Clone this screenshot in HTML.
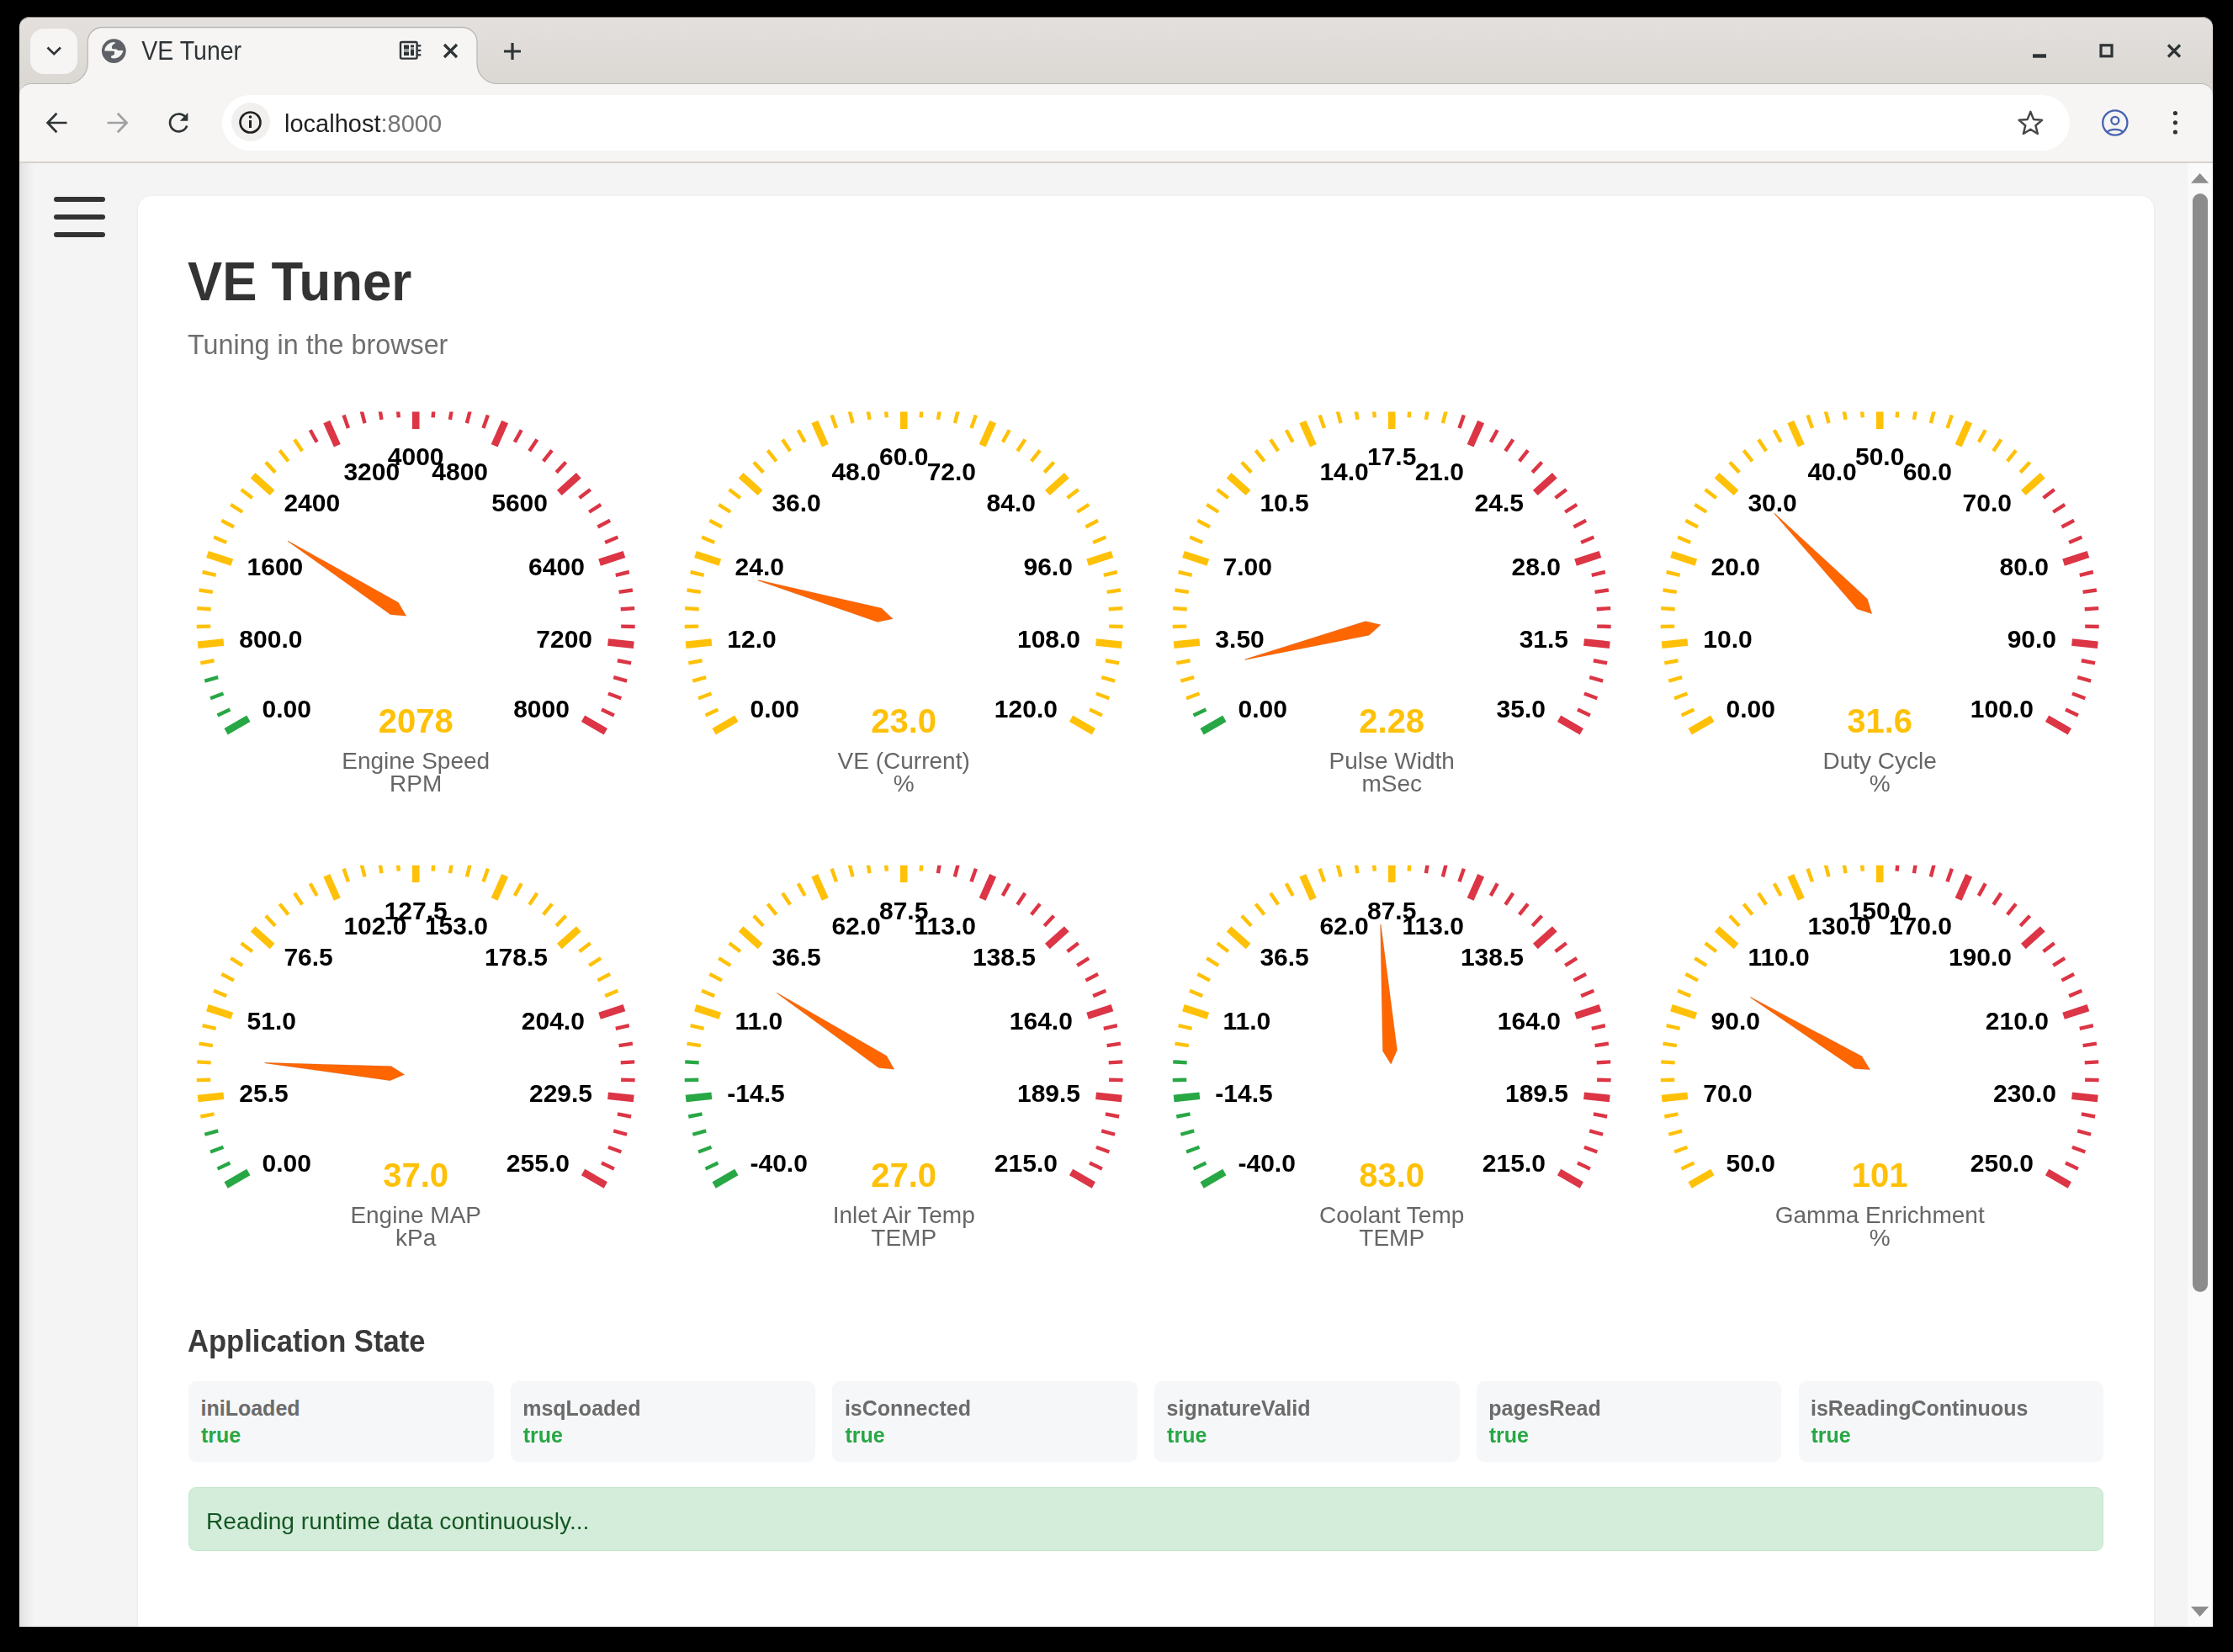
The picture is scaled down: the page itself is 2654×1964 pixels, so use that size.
<!DOCTYPE html><html><head><meta charset="utf-8"><title>VE Tuner</title><style>
*{box-sizing:border-box;margin:0;padding:0}
html,body{width:2654px;height:1964px;overflow:hidden;background:#000}
body{position:relative;font-family:"Liberation Sans",sans-serif}
.abs{position:absolute}
#win{position:absolute;left:23px;top:20px;width:2607px;height:1914px;border-radius:12px 12px 0 0;overflow:hidden;background:#dcd9d6}
#strip{position:absolute;left:0;top:0;width:2607px;height:80px;background:linear-gradient(#e3e0dd,#dbd8d4);border-radius:12px 12px 0 0;box-shadow:inset 0 1px 0 rgba(60,60,60,0.55)}
#toolbar{position:absolute;left:0;top:79px;width:2607px;height:93.5px;background:#f6f5f4;border-radius:14px 14px 0 0;border-top:1.5px solid #b8b6b4}
#tbline{position:absolute;left:0;top:172px;width:2607px;height:1.5px;background:#d6d2ce}
#view{position:absolute;left:0;top:173.5px;width:2607px;height:1741px;background:#f4f4f4;overflow:hidden}
#lshadow{position:absolute;left:0;top:0;width:18px;height:1741px;background:linear-gradient(to right,rgba(0,0,0,0.07),rgba(0,0,0,0))}
#sbar{position:absolute;left:2576.5px;top:0;width:30.5px;height:1741px;background:#fafafa}
#thumb{position:absolute;left:6.5px;top:36.3px;width:18px;height:1306.5px;border-radius:9px;background:#8c8c8c}
#card{position:absolute;left:141px;top:39.5px;width:2396px;height:1800px;background:#fff;border-radius:16px;box-shadow:0 1px 4px rgba(0,0,0,0.06)}
.ham{position:absolute;left:41px;width:60.5px;height:6px;border-radius:3px;background:#333}
#tab{position:absolute;left:82px;top:12px;width:463px;height:68px;background:#f6f5f4;border-radius:12px 12px 0 0;border:1px solid #c2bfbc;border-bottom:none}
#chev{position:absolute;left:13px;top:14px;width:56px;height:53.6px;background:#f6f5f4;border-radius:16px}
#addr{position:absolute;left:241px;top:92.5px;width:2196px;height:66px;background:#fff;border-radius:33px}
#infobg{position:absolute;left:252px;top:102px;width:46px;height:46px;border-radius:23px;background:#f1f0ef}
.t{position:absolute;white-space:nowrap;line-height:1}
svg{position:absolute;left:0;top:0;overflow:visible;will-change:transform}
.t{will-change:transform}
.gl{font:bold 30px "Liberation Sans",sans-serif;fill:#000}
.gv{font:bold 40px "Liberation Sans",sans-serif;fill:#ffc107}
.gt{font:28px "Liberation Sans",sans-serif;fill:#666}
.box{position:absolute;top:1641.5px;width:362.5px;height:96px;background:#f6f7f9;border-radius:9px}
.bk{position:absolute;left:14.5px;top:18px;font:bold 25px "Liberation Sans",sans-serif;color:#6b6b6b;white-space:nowrap}
.bv{position:absolute;left:15px;top:50px;font:bold 25px "Liberation Sans",sans-serif;color:#28a745;white-space:nowrap}
#alert{position:absolute;left:224px;top:1767.5px;width:2276px;height:76.5px;background:#d4edda;border:1.5px solid #c3e6cb;border-radius:9px}
</style></head><body>
<div id="win">
<div id="strip"></div>
<div id="toolbar"></div>
<svg width="2607" height="100" style="left:0;top:0"><path d="M56.6,79.7 C70,79.7 81.2,69 81.2,55 L81.2,30 C81.2,20 89,12.5 99,12.5 L526,12.5 C536,12.5 544,20 544,30 L544,55 C544,69 555,79.7 568.7,79.7 L568.7,82 L56.6,82 Z" fill="#f6f5f4"/><path d="M56.6,79.7 C70,79.7 81.2,69 81.2,55 L81.2,30 C81.2,20 89,12.5 99,12.5 L526,12.5 C536,12.5 544,20 544,30 L544,55 C544,69 555,79.7 568.7,79.7" fill="none" stroke="#bab8b6" stroke-width="1.3"/></svg>
<div id="chev"></div>
<div id="addr"></div><div id="infobg"></div>
<div id="tbline"></div>
<div id="view"><div id="lshadow"></div><div id="card"></div><div id="sbar"><div id="thumb"></div></div></div>
</div>
<div class="ham" style="left:64px;top:234px"></div>
<div class="ham" style="left:64px;top:255px"></div>
<div class="ham" style="left:64px;top:276px"></div>
<svg width="2654" height="1964" style="left:0;top:0">
<g fill="none" stroke="#2e3436" stroke-width="3" stroke-linecap="butt" stroke-linejoin="miter">
 <path d="M56.5,56.5 L64.2,64.2 L71.9,56.5" stroke-width="2.7"/>
</g>
<g transform="translate(135.3,60.6)">
 <circle r="14.4" fill="#5e6266"/>
 <path d="M-11.1,0 A11.3,11.3 0 0 1 1.45,-10.4 L1.45,-9 C-1,-8 -2.5,-6 -2.4,-4.1 C-2.3,-2.5 -1.5,-2.3 0,-2.3 L2.9,-2.2 C4,-2 4.4,-1.5 4.4,-0.7 L11.1,-0.5 A11.3,11.3 0 0 1 -2.9,8.5 L-3.4,6.1 C-1,5 0.7,4.5 0.7,3.9 L0.7,0.7 C0.7,0.3 0,0.25 -1,0.25 Z" fill="#f6f5f4"/>
</g>
<text transform="translate(168.3,70.6) scale(1,1.075)" x="0" y="0" style="font:28.5px 'Liberation Sans',sans-serif" fill="#2e3436">VE Tuner</text>
<g>
 <rect x="476" y="50" width="19.6" height="19.6" rx="1.5" fill="none" stroke="#2e3436" stroke-width="2.4"/>
 <rect x="480" y="53.5" width="6" height="5" fill="#2e3436"/><rect x="480" y="58.5" width="6" height="3.5" fill="#9a9c9e"/><rect x="480" y="62" width="6" height="4" fill="#2e3436"/>
 <rect x="488" y="53.5" width="4" height="2.6" fill="#2e3436"/><rect x="488" y="56.1" width="4" height="3" fill="#9a9c9e"/><rect x="488" y="59.1" width="4" height="7" fill="#2e3436"/>
 <rect x="496.5" y="53.2" width="3.8" height="2.3" fill="#2e3436"/><rect x="496.5" y="58.8" width="3.8" height="2.3" fill="#2e3436"/><rect x="496.5" y="64.2" width="3.8" height="2.3" fill="#2e3436"/>
</g>
<g stroke="#2e3436" stroke-width="3.2" fill="none">
 <path d="M528,53 L543,68 M543,53 L528,68"/>
 <path d="M609,51 v20 M599,61 h20"/>
 <path d="M2416,66.5 h16" stroke-width="4.5"/>
 <rect x="2497" y="53.8" width="13" height="13" stroke-width="3.2"/>
 <path d="M2577,53.5 L2591,67.5 M2591,53.5 L2577,67.5"/>
</g>
<g stroke="#2e3436" stroke-width="2.7" fill="none" stroke-linecap="butt">
 <path d="M79.5,146 H57.5 M67.4,134.8 L56.6,146 L67.4,157.2"/>
</g>
<g stroke="#a1a1a1" stroke-width="2.7" fill="none">
 <path d="M127.6,146 H149.6 M139.8,134.8 L150.6,146 L139.8,157.2"/>
</g>
<g stroke="#2e3436" stroke-width="2.7" fill="none">
 <path d="M221.6,141 A10.4,10.4 0 1 0 222.2,149.5"/>
</g>
<path d="M223.3,134 V143.8 H213.8 Z" fill="#2e3436"/>
<g>
 <circle cx="297.5" cy="145.5" r="12" fill="none" stroke="#1f1f1f" stroke-width="2.6"/>
 <rect x="296" y="143" width="3" height="9" fill="#1f1f1f"/>
 <circle cx="297.5" cy="139" r="1.8" fill="#1f1f1f"/>
</g>
<text x="338" y="157" style="font:29px 'Liberation Sans',sans-serif"><tspan fill="#1f1f1f">localhost</tspan><tspan fill="#767676">:8000</tspan></text>
<path d="M2413.35,132.90 L2417.11,142.12 L2427.05,142.85 L2419.44,149.28 L2421.81,158.95 L2413.35,153.70 L2404.89,158.95 L2407.26,149.28 L2399.65,142.85 L2409.59,142.12 Z" fill="none" stroke="#474747" stroke-width="2.5" stroke-linejoin="round"/>
<g fill="none" stroke="#4763b0" stroke-width="2.3">
 <circle cx="2513.8" cy="146" r="14.6"/>
 <circle cx="2513.8" cy="143.3" r="4.5"/>
 <path d="M2504.8,157 C2507.5,152.8 2520,152.8 2522.8,157"/>
</g>
<g fill="#2e3436">
 <circle cx="2585.4" cy="134.5" r="2.6"/><circle cx="2585.4" cy="145.8" r="2.6"/><circle cx="2585.4" cy="157" r="2.6"/>
</g>
<g fill="#8d8d8d">
 <path d="M2604,217.7 L2614.6,206 L2625.3,217.7 Z"/>
 <path d="M2604,1910 L2614.6,1922 L2625.3,1910 Z"/>
</g>
</svg>
<div class="t" style="left:223px;top:296.6px;font:bold 61.7px 'Liberation Sans',sans-serif;color:#333;transform:scaleY(1.051);transform-origin:0 0">VE Tuner</div>
<div class="t" style="left:223px;top:392.2px;font:32.3px 'Liberation Sans',sans-serif;color:#6f6f6f">Tuning in the browser</div>
<div class="t" style="left:223px;top:1573px;font:bold 34.6px 'Liberation Sans',sans-serif;color:#3a3a3a;transform:scaleY(1.09);transform-origin:0 0">Application State</div>
<div class="box" style="left:224.0px"><div class="bk">iniLoaded</div><div class="bv">true</div></div>
<div class="box" style="left:606.7px"><div class="bk">msqLoaded</div><div class="bv">true</div></div>
<div class="box" style="left:989.4px"><div class="bk">isConnected</div><div class="bv">true</div></div>
<div class="box" style="left:1372.1px"><div class="bk">signatureValid</div><div class="bv">true</div></div>
<div class="box" style="left:1754.8px"><div class="bk">pagesRead</div><div class="bv">true</div></div>
<div class="box" style="left:2137.5px"><div class="bk">isReadingContinuous</div><div class="bv">true</div></div>
<div id="alert"><div class="t" style="left:19.5px;top:23px;font:28.2px 'Liberation Sans',sans-serif;color:#155724">Reading runtime data continuously...</div></div>
<svg width="2654" height="1964"><defs><clipPath id="row0"><rect x="0" y="489.5" width="2654" height="700"/></clipPath><clipPath id="row1"><rect x="0" y="1028.7" width="2654" height="700"/></clipPath></defs>
<g clip-path="url(#row0)">
<line x1="295.36" y1="854.3" x2="268.6" y2="869.75" stroke="#28a745" stroke-width="8.6"/>
<line x1="273.42" y1="843.39" x2="258.49" y2="850.42" stroke="#28a745" stroke-width="4.4"/>
<line x1="265.5" y1="824.55" x2="250.04" y2="830.3" stroke="#28a745" stroke-width="4.4"/>
<line x1="259.19" y1="805.12" x2="243.3" y2="809.55" stroke="#28a745" stroke-width="4.4"/>
<line x1="254.52" y1="785.22" x2="238.31" y2="788.31" stroke="#ffc107" stroke-width="4.4"/>
<line x1="265.86" y1="763.5" x2="235.13" y2="766.73" stroke="#ffc107" stroke-width="8.6"/>
<line x1="250.25" y1="744.61" x2="233.76" y2="744.96" stroke="#ffc107" stroke-width="4.4"/>
<line x1="250.68" y1="724.18" x2="234.21" y2="723.14" stroke="#ffc107" stroke-width="4.4"/>
<line x1="252.82" y1="703.86" x2="236.49" y2="701.45" stroke="#ffc107" stroke-width="4.4"/>
<line x1="256.65" y1="683.78" x2="240.58" y2="680.01" stroke="#ffc107" stroke-width="4.4"/>
<line x1="275.84" y1="668.55" x2="246.45" y2="659" stroke="#ffc107" stroke-width="8.6"/>
<line x1="269.27" y1="644.95" x2="254.05" y2="638.55" stroke="#ffc107" stroke-width="4.4"/>
<line x1="277.97" y1="626.46" x2="263.34" y2="618.81" stroke="#ffc107" stroke-width="4.4"/>
<line x1="288.18" y1="608.76" x2="274.25" y2="599.92" stroke="#ffc107" stroke-width="4.4"/>
<line x1="299.85" y1="591.98" x2="286.7" y2="582" stroke="#ffc107" stroke-width="4.4"/>
<line x1="323.57" y1="585.87" x2="300.61" y2="565.19" stroke="#ffc107" stroke-width="8.6"/>
<line x1="327.17" y1="561.63" x2="315.88" y2="549.6" stroke="#ffc107" stroke-width="4.4"/>
<line x1="342.64" y1="548.28" x2="332.39" y2="535.35" stroke="#ffc107" stroke-width="4.4"/>
<line x1="359.17" y1="536.27" x2="350.04" y2="522.52" stroke="#ffc107" stroke-width="4.4"/>
<line x1="376.65" y1="525.68" x2="368.7" y2="511.22" stroke="#dc3545" stroke-width="4.4"/>
<line x1="400.81" y1="529.75" x2="388.25" y2="501.52" stroke="#dc3545" stroke-width="8.6"/>
<line x1="413.96" y1="509.07" x2="408.53" y2="493.49" stroke="#dc3545" stroke-width="4.4"/>
<line x1="433.52" y1="503.17" x2="429.42" y2="487.18" stroke="#dc3545" stroke-width="4.4"/>
<line x1="453.51" y1="498.92" x2="450.76" y2="482.65" stroke="#dc3545" stroke-width="4.4"/>
<line x1="473.78" y1="496.36" x2="472.4" y2="479.91" stroke="#dc3545" stroke-width="4.4"/>
<line x1="494.2" y1="509.9" x2="494.2" y2="479" stroke="#dc3545" stroke-width="8.6"/>
<line x1="514.62" y1="496.36" x2="516" y2="479.91" stroke="#dc3545" stroke-width="4.4"/>
<line x1="534.89" y1="498.92" x2="537.64" y2="482.65" stroke="#dc3545" stroke-width="4.4"/>
<line x1="554.88" y1="503.17" x2="558.98" y2="487.18" stroke="#dc3545" stroke-width="4.4"/>
<line x1="574.44" y1="509.07" x2="579.87" y2="493.49" stroke="#dc3545" stroke-width="4.4"/>
<line x1="587.59" y1="529.75" x2="600.15" y2="501.52" stroke="#dc3545" stroke-width="8.6"/>
<line x1="611.75" y1="525.68" x2="619.7" y2="511.22" stroke="#dc3545" stroke-width="4.4"/>
<line x1="629.23" y1="536.27" x2="638.36" y2="522.52" stroke="#dc3545" stroke-width="4.4"/>
<line x1="645.76" y1="548.28" x2="656.01" y2="535.35" stroke="#dc3545" stroke-width="4.4"/>
<line x1="661.23" y1="561.63" x2="672.52" y2="549.6" stroke="#dc3545" stroke-width="4.4"/>
<line x1="664.83" y1="585.87" x2="687.79" y2="565.19" stroke="#dc3545" stroke-width="8.6"/>
<line x1="688.55" y1="591.98" x2="701.7" y2="582" stroke="#dc3545" stroke-width="4.4"/>
<line x1="700.22" y1="608.76" x2="714.15" y2="599.92" stroke="#dc3545" stroke-width="4.4"/>
<line x1="710.43" y1="626.46" x2="725.06" y2="618.81" stroke="#dc3545" stroke-width="4.4"/>
<line x1="719.13" y1="644.95" x2="734.35" y2="638.55" stroke="#dc3545" stroke-width="4.4"/>
<line x1="712.56" y1="668.55" x2="741.95" y2="659" stroke="#dc3545" stroke-width="8.6"/>
<line x1="731.75" y1="683.78" x2="747.82" y2="680.01" stroke="#dc3545" stroke-width="4.4"/>
<line x1="735.58" y1="703.86" x2="751.91" y2="701.45" stroke="#dc3545" stroke-width="4.4"/>
<line x1="737.72" y1="724.18" x2="754.19" y2="723.14" stroke="#dc3545" stroke-width="4.4"/>
<line x1="738.15" y1="744.61" x2="754.64" y2="744.96" stroke="#dc3545" stroke-width="4.4"/>
<line x1="722.54" y1="763.5" x2="753.27" y2="766.73" stroke="#dc3545" stroke-width="8.6"/>
<line x1="733.88" y1="785.22" x2="750.09" y2="788.31" stroke="#dc3545" stroke-width="4.4"/>
<line x1="729.21" y1="805.12" x2="745.1" y2="809.55" stroke="#dc3545" stroke-width="4.4"/>
<line x1="722.9" y1="824.55" x2="738.36" y2="830.3" stroke="#dc3545" stroke-width="4.4"/>
<line x1="714.98" y1="843.39" x2="729.91" y2="850.42" stroke="#dc3545" stroke-width="4.4"/>
<line x1="693.04" y1="854.3" x2="719.8" y2="869.75" stroke="#dc3545" stroke-width="8.6"/>
<text x="311.47" y="852.9" text-anchor="start" class="gl">0.00</text>
<text x="284.36" y="770.17" text-anchor="start" class="gl">800.0</text>
<text x="293.53" y="683.65" text-anchor="start" class="gl">1600</text>
<text x="337.4" y="608.32" text-anchor="start" class="gl">2400</text>
<text x="408.38" y="571.44" text-anchor="start" class="gl">3200</text>
<text x="494.2" y="553.35" text-anchor="middle" class="gl">4000</text>
<text x="580.02" y="571.44" text-anchor="end" class="gl">4800</text>
<text x="651" y="608.32" text-anchor="end" class="gl">5600</text>
<text x="694.87" y="683.65" text-anchor="end" class="gl">6400</text>
<text x="704.04" y="770.17" text-anchor="end" class="gl">7200</text>
<text x="676.93" y="852.9" text-anchor="end" class="gl">8000</text>
<text x="494.2" y="870.5" text-anchor="middle" class="gv">2078</text>
<text x="494.2" y="913.5" text-anchor="middle" class="gt">Engine Speed</text>
<text x="494.2" y="940.5" text-anchor="middle" class="gt">RPM</text>
<polygon points="342.31,642.91 473.45,716.19 482.79,732.28 464.25,730.72 341.93,643.51" fill="#ff6600" stroke="rgba(120,60,20,0.25)" stroke-width="0.6"/>
</g>
<g clip-path="url(#row0)">
<line x1="875.36" y1="854.3" x2="848.6" y2="869.75" stroke="#ffc107" stroke-width="8.6"/>
<line x1="853.42" y1="843.39" x2="838.49" y2="850.42" stroke="#ffc107" stroke-width="4.4"/>
<line x1="845.5" y1="824.55" x2="830.04" y2="830.3" stroke="#ffc107" stroke-width="4.4"/>
<line x1="839.19" y1="805.12" x2="823.3" y2="809.55" stroke="#ffc107" stroke-width="4.4"/>
<line x1="834.52" y1="785.22" x2="818.31" y2="788.31" stroke="#ffc107" stroke-width="4.4"/>
<line x1="845.86" y1="763.5" x2="815.13" y2="766.73" stroke="#ffc107" stroke-width="8.6"/>
<line x1="830.25" y1="744.61" x2="813.76" y2="744.96" stroke="#ffc107" stroke-width="4.4"/>
<line x1="830.68" y1="724.18" x2="814.21" y2="723.14" stroke="#ffc107" stroke-width="4.4"/>
<line x1="832.82" y1="703.86" x2="816.49" y2="701.45" stroke="#ffc107" stroke-width="4.4"/>
<line x1="836.65" y1="683.78" x2="820.58" y2="680.01" stroke="#ffc107" stroke-width="4.4"/>
<line x1="855.84" y1="668.55" x2="826.45" y2="659" stroke="#ffc107" stroke-width="8.6"/>
<line x1="849.27" y1="644.95" x2="834.05" y2="638.55" stroke="#ffc107" stroke-width="4.4"/>
<line x1="857.97" y1="626.46" x2="843.34" y2="618.81" stroke="#ffc107" stroke-width="4.4"/>
<line x1="868.18" y1="608.76" x2="854.25" y2="599.92" stroke="#ffc107" stroke-width="4.4"/>
<line x1="879.85" y1="591.98" x2="866.7" y2="582" stroke="#ffc107" stroke-width="4.4"/>
<line x1="903.57" y1="585.87" x2="880.61" y2="565.19" stroke="#ffc107" stroke-width="8.6"/>
<line x1="907.17" y1="561.63" x2="895.88" y2="549.6" stroke="#ffc107" stroke-width="4.4"/>
<line x1="922.64" y1="548.28" x2="912.39" y2="535.35" stroke="#ffc107" stroke-width="4.4"/>
<line x1="939.17" y1="536.27" x2="930.04" y2="522.52" stroke="#ffc107" stroke-width="4.4"/>
<line x1="956.65" y1="525.68" x2="948.7" y2="511.22" stroke="#ffc107" stroke-width="4.4"/>
<line x1="980.81" y1="529.75" x2="968.25" y2="501.52" stroke="#ffc107" stroke-width="8.6"/>
<line x1="993.96" y1="509.07" x2="988.53" y2="493.49" stroke="#ffc107" stroke-width="4.4"/>
<line x1="1013.52" y1="503.17" x2="1009.42" y2="487.18" stroke="#ffc107" stroke-width="4.4"/>
<line x1="1033.51" y1="498.92" x2="1030.76" y2="482.65" stroke="#ffc107" stroke-width="4.4"/>
<line x1="1053.78" y1="496.36" x2="1052.4" y2="479.91" stroke="#ffc107" stroke-width="4.4"/>
<line x1="1074.2" y1="509.9" x2="1074.2" y2="479" stroke="#ffc107" stroke-width="8.6"/>
<line x1="1094.62" y1="496.36" x2="1096" y2="479.91" stroke="#ffc107" stroke-width="4.4"/>
<line x1="1114.89" y1="498.92" x2="1117.64" y2="482.65" stroke="#ffc107" stroke-width="4.4"/>
<line x1="1134.88" y1="503.17" x2="1138.98" y2="487.18" stroke="#ffc107" stroke-width="4.4"/>
<line x1="1154.44" y1="509.07" x2="1159.87" y2="493.49" stroke="#ffc107" stroke-width="4.4"/>
<line x1="1167.59" y1="529.75" x2="1180.15" y2="501.52" stroke="#ffc107" stroke-width="8.6"/>
<line x1="1191.75" y1="525.68" x2="1199.7" y2="511.22" stroke="#ffc107" stroke-width="4.4"/>
<line x1="1209.23" y1="536.27" x2="1218.36" y2="522.52" stroke="#ffc107" stroke-width="4.4"/>
<line x1="1225.76" y1="548.28" x2="1236.01" y2="535.35" stroke="#ffc107" stroke-width="4.4"/>
<line x1="1241.23" y1="561.63" x2="1252.52" y2="549.6" stroke="#ffc107" stroke-width="4.4"/>
<line x1="1244.83" y1="585.87" x2="1267.79" y2="565.19" stroke="#ffc107" stroke-width="8.6"/>
<line x1="1268.55" y1="591.98" x2="1281.7" y2="582" stroke="#ffc107" stroke-width="4.4"/>
<line x1="1280.22" y1="608.76" x2="1294.15" y2="599.92" stroke="#ffc107" stroke-width="4.4"/>
<line x1="1290.43" y1="626.46" x2="1305.06" y2="618.81" stroke="#ffc107" stroke-width="4.4"/>
<line x1="1299.13" y1="644.95" x2="1314.35" y2="638.55" stroke="#ffc107" stroke-width="4.4"/>
<line x1="1292.56" y1="668.55" x2="1321.95" y2="659" stroke="#ffc107" stroke-width="8.6"/>
<line x1="1311.75" y1="683.78" x2="1327.82" y2="680.01" stroke="#ffc107" stroke-width="4.4"/>
<line x1="1315.58" y1="703.86" x2="1331.91" y2="701.45" stroke="#ffc107" stroke-width="4.4"/>
<line x1="1317.72" y1="724.18" x2="1334.19" y2="723.14" stroke="#ffc107" stroke-width="4.4"/>
<line x1="1318.15" y1="744.61" x2="1334.64" y2="744.96" stroke="#ffc107" stroke-width="4.4"/>
<line x1="1302.54" y1="763.5" x2="1333.27" y2="766.73" stroke="#ffc107" stroke-width="8.6"/>
<line x1="1313.88" y1="785.22" x2="1330.09" y2="788.31" stroke="#ffc107" stroke-width="4.4"/>
<line x1="1309.21" y1="805.12" x2="1325.1" y2="809.55" stroke="#ffc107" stroke-width="4.4"/>
<line x1="1302.9" y1="824.55" x2="1318.36" y2="830.3" stroke="#ffc107" stroke-width="4.4"/>
<line x1="1294.98" y1="843.39" x2="1309.91" y2="850.42" stroke="#ffc107" stroke-width="4.4"/>
<line x1="1273.04" y1="854.3" x2="1299.8" y2="869.75" stroke="#ffc107" stroke-width="8.6"/>
<text x="891.47" y="852.9" text-anchor="start" class="gl">0.00</text>
<text x="864.36" y="770.17" text-anchor="start" class="gl">12.0</text>
<text x="873.53" y="683.65" text-anchor="start" class="gl">24.0</text>
<text x="917.4" y="608.32" text-anchor="start" class="gl">36.0</text>
<text x="988.38" y="571.44" text-anchor="start" class="gl">48.0</text>
<text x="1074.2" y="553.35" text-anchor="middle" class="gl">60.0</text>
<text x="1160.02" y="571.44" text-anchor="end" class="gl">72.0</text>
<text x="1231" y="608.32" text-anchor="end" class="gl">84.0</text>
<text x="1274.87" y="683.65" text-anchor="end" class="gl">96.0</text>
<text x="1284.04" y="770.17" text-anchor="end" class="gl">108.0</text>
<text x="1256.93" y="852.9" text-anchor="end" class="gl">120.0</text>
<text x="1074.2" y="870.5" text-anchor="middle" class="gv">23.0</text>
<text x="1074.2" y="913.5" text-anchor="middle" class="gt">VE (Current)</text>
<text x="1074.2" y="940.5" text-anchor="middle" class="gt">%</text>
<polygon points="901.27,689.55 1047.73,722.96 1061.22,735.78 1042.99,739.5 901.08,690.22" fill="#ff6600" stroke="rgba(120,60,20,0.25)" stroke-width="0.6"/>
</g>
<g clip-path="url(#row0)">
<line x1="1455.36" y1="854.3" x2="1428.6" y2="869.75" stroke="#28a745" stroke-width="8.6"/>
<line x1="1433.42" y1="843.39" x2="1418.49" y2="850.42" stroke="#28a745" stroke-width="4.4"/>
<line x1="1425.5" y1="824.55" x2="1410.04" y2="830.3" stroke="#ffc107" stroke-width="4.4"/>
<line x1="1419.19" y1="805.12" x2="1403.3" y2="809.55" stroke="#ffc107" stroke-width="4.4"/>
<line x1="1414.52" y1="785.22" x2="1398.31" y2="788.31" stroke="#ffc107" stroke-width="4.4"/>
<line x1="1425.86" y1="763.5" x2="1395.13" y2="766.73" stroke="#ffc107" stroke-width="8.6"/>
<line x1="1410.25" y1="744.61" x2="1393.76" y2="744.96" stroke="#ffc107" stroke-width="4.4"/>
<line x1="1410.68" y1="724.18" x2="1394.21" y2="723.14" stroke="#ffc107" stroke-width="4.4"/>
<line x1="1412.82" y1="703.86" x2="1396.49" y2="701.45" stroke="#ffc107" stroke-width="4.4"/>
<line x1="1416.65" y1="683.78" x2="1400.58" y2="680.01" stroke="#ffc107" stroke-width="4.4"/>
<line x1="1435.84" y1="668.55" x2="1406.45" y2="659" stroke="#ffc107" stroke-width="8.6"/>
<line x1="1429.27" y1="644.95" x2="1414.05" y2="638.55" stroke="#ffc107" stroke-width="4.4"/>
<line x1="1437.97" y1="626.46" x2="1423.34" y2="618.81" stroke="#ffc107" stroke-width="4.4"/>
<line x1="1448.18" y1="608.76" x2="1434.25" y2="599.92" stroke="#ffc107" stroke-width="4.4"/>
<line x1="1459.85" y1="591.98" x2="1446.7" y2="582" stroke="#ffc107" stroke-width="4.4"/>
<line x1="1483.57" y1="585.87" x2="1460.61" y2="565.19" stroke="#ffc107" stroke-width="8.6"/>
<line x1="1487.17" y1="561.63" x2="1475.88" y2="549.6" stroke="#ffc107" stroke-width="4.4"/>
<line x1="1502.64" y1="548.28" x2="1492.39" y2="535.35" stroke="#ffc107" stroke-width="4.4"/>
<line x1="1519.17" y1="536.27" x2="1510.04" y2="522.52" stroke="#ffc107" stroke-width="4.4"/>
<line x1="1536.65" y1="525.68" x2="1528.7" y2="511.22" stroke="#ffc107" stroke-width="4.4"/>
<line x1="1560.81" y1="529.75" x2="1548.25" y2="501.52" stroke="#ffc107" stroke-width="8.6"/>
<line x1="1573.96" y1="509.07" x2="1568.53" y2="493.49" stroke="#ffc107" stroke-width="4.4"/>
<line x1="1593.52" y1="503.17" x2="1589.42" y2="487.18" stroke="#ffc107" stroke-width="4.4"/>
<line x1="1613.51" y1="498.92" x2="1610.76" y2="482.65" stroke="#ffc107" stroke-width="4.4"/>
<line x1="1633.78" y1="496.36" x2="1632.4" y2="479.91" stroke="#ffc107" stroke-width="4.4"/>
<line x1="1654.2" y1="509.9" x2="1654.2" y2="479" stroke="#ffc107" stroke-width="8.6"/>
<line x1="1674.62" y1="496.36" x2="1676" y2="479.91" stroke="#ffc107" stroke-width="4.4"/>
<line x1="1694.89" y1="498.92" x2="1697.64" y2="482.65" stroke="#ffc107" stroke-width="4.4"/>
<line x1="1714.88" y1="503.17" x2="1718.98" y2="487.18" stroke="#ffc107" stroke-width="4.4"/>
<line x1="1734.44" y1="509.07" x2="1739.87" y2="493.49" stroke="#dc3545" stroke-width="4.4"/>
<line x1="1747.59" y1="529.75" x2="1760.15" y2="501.52" stroke="#dc3545" stroke-width="8.6"/>
<line x1="1771.75" y1="525.68" x2="1779.7" y2="511.22" stroke="#dc3545" stroke-width="4.4"/>
<line x1="1789.23" y1="536.27" x2="1798.36" y2="522.52" stroke="#dc3545" stroke-width="4.4"/>
<line x1="1805.76" y1="548.28" x2="1816.01" y2="535.35" stroke="#dc3545" stroke-width="4.4"/>
<line x1="1821.23" y1="561.63" x2="1832.52" y2="549.6" stroke="#dc3545" stroke-width="4.4"/>
<line x1="1824.83" y1="585.87" x2="1847.79" y2="565.19" stroke="#dc3545" stroke-width="8.6"/>
<line x1="1848.55" y1="591.98" x2="1861.7" y2="582" stroke="#dc3545" stroke-width="4.4"/>
<line x1="1860.22" y1="608.76" x2="1874.15" y2="599.92" stroke="#dc3545" stroke-width="4.4"/>
<line x1="1870.43" y1="626.46" x2="1885.06" y2="618.81" stroke="#dc3545" stroke-width="4.4"/>
<line x1="1879.13" y1="644.95" x2="1894.35" y2="638.55" stroke="#dc3545" stroke-width="4.4"/>
<line x1="1872.56" y1="668.55" x2="1901.95" y2="659" stroke="#dc3545" stroke-width="8.6"/>
<line x1="1891.75" y1="683.78" x2="1907.82" y2="680.01" stroke="#dc3545" stroke-width="4.4"/>
<line x1="1895.58" y1="703.86" x2="1911.91" y2="701.45" stroke="#dc3545" stroke-width="4.4"/>
<line x1="1897.72" y1="724.18" x2="1914.19" y2="723.14" stroke="#dc3545" stroke-width="4.4"/>
<line x1="1898.15" y1="744.61" x2="1914.64" y2="744.96" stroke="#dc3545" stroke-width="4.4"/>
<line x1="1882.54" y1="763.5" x2="1913.27" y2="766.73" stroke="#dc3545" stroke-width="8.6"/>
<line x1="1893.88" y1="785.22" x2="1910.09" y2="788.31" stroke="#dc3545" stroke-width="4.4"/>
<line x1="1889.21" y1="805.12" x2="1905.1" y2="809.55" stroke="#dc3545" stroke-width="4.4"/>
<line x1="1882.9" y1="824.55" x2="1898.36" y2="830.3" stroke="#dc3545" stroke-width="4.4"/>
<line x1="1874.98" y1="843.39" x2="1889.91" y2="850.42" stroke="#dc3545" stroke-width="4.4"/>
<line x1="1853.04" y1="854.3" x2="1879.8" y2="869.75" stroke="#dc3545" stroke-width="8.6"/>
<text x="1471.47" y="852.9" text-anchor="start" class="gl">0.00</text>
<text x="1444.36" y="770.17" text-anchor="start" class="gl">3.50</text>
<text x="1453.53" y="683.65" text-anchor="start" class="gl">7.00</text>
<text x="1497.4" y="608.32" text-anchor="start" class="gl">10.5</text>
<text x="1568.38" y="571.44" text-anchor="start" class="gl">14.0</text>
<text x="1654.2" y="553.35" text-anchor="middle" class="gl">17.5</text>
<text x="1740.02" y="571.44" text-anchor="end" class="gl">21.0</text>
<text x="1811" y="608.32" text-anchor="end" class="gl">24.5</text>
<text x="1854.87" y="683.65" text-anchor="end" class="gl">28.0</text>
<text x="1864.04" y="770.17" text-anchor="end" class="gl">31.5</text>
<text x="1836.93" y="852.9" text-anchor="end" class="gl">35.0</text>
<text x="1654.2" y="870.5" text-anchor="middle" class="gv">2.28</text>
<text x="1654.2" y="913.5" text-anchor="middle" class="gt">Pulse Width</text>
<text x="1654.2" y="940.5" text-anchor="middle" class="gt">mSec</text>
<polygon points="1479.74,783.82 1623,738.61 1641.12,742.85 1627.27,755.27 1479.92,784.5" fill="#ff6600" stroke="rgba(120,60,20,0.25)" stroke-width="0.6"/>
</g>
<g clip-path="url(#row0)">
<line x1="2035.36" y1="854.3" x2="2008.6" y2="869.75" stroke="#ffc107" stroke-width="8.6"/>
<line x1="2013.42" y1="843.39" x2="1998.49" y2="850.42" stroke="#ffc107" stroke-width="4.4"/>
<line x1="2005.5" y1="824.55" x2="1990.04" y2="830.3" stroke="#ffc107" stroke-width="4.4"/>
<line x1="1999.19" y1="805.12" x2="1983.3" y2="809.55" stroke="#ffc107" stroke-width="4.4"/>
<line x1="1994.52" y1="785.22" x2="1978.31" y2="788.31" stroke="#ffc107" stroke-width="4.4"/>
<line x1="2005.86" y1="763.5" x2="1975.13" y2="766.73" stroke="#ffc107" stroke-width="8.6"/>
<line x1="1990.25" y1="744.61" x2="1973.76" y2="744.96" stroke="#ffc107" stroke-width="4.4"/>
<line x1="1990.68" y1="724.18" x2="1974.21" y2="723.14" stroke="#ffc107" stroke-width="4.4"/>
<line x1="1992.82" y1="703.86" x2="1976.49" y2="701.45" stroke="#ffc107" stroke-width="4.4"/>
<line x1="1996.65" y1="683.78" x2="1980.58" y2="680.01" stroke="#ffc107" stroke-width="4.4"/>
<line x1="2015.84" y1="668.55" x2="1986.45" y2="659" stroke="#ffc107" stroke-width="8.6"/>
<line x1="2009.27" y1="644.95" x2="1994.05" y2="638.55" stroke="#ffc107" stroke-width="4.4"/>
<line x1="2017.97" y1="626.46" x2="2003.34" y2="618.81" stroke="#ffc107" stroke-width="4.4"/>
<line x1="2028.18" y1="608.76" x2="2014.25" y2="599.92" stroke="#ffc107" stroke-width="4.4"/>
<line x1="2039.85" y1="591.98" x2="2026.7" y2="582" stroke="#ffc107" stroke-width="4.4"/>
<line x1="2063.57" y1="585.87" x2="2040.61" y2="565.19" stroke="#ffc107" stroke-width="8.6"/>
<line x1="2067.17" y1="561.63" x2="2055.88" y2="549.6" stroke="#ffc107" stroke-width="4.4"/>
<line x1="2082.64" y1="548.28" x2="2072.39" y2="535.35" stroke="#ffc107" stroke-width="4.4"/>
<line x1="2099.17" y1="536.27" x2="2090.04" y2="522.52" stroke="#ffc107" stroke-width="4.4"/>
<line x1="2116.65" y1="525.68" x2="2108.7" y2="511.22" stroke="#ffc107" stroke-width="4.4"/>
<line x1="2140.81" y1="529.75" x2="2128.25" y2="501.52" stroke="#ffc107" stroke-width="8.6"/>
<line x1="2153.96" y1="509.07" x2="2148.53" y2="493.49" stroke="#ffc107" stroke-width="4.4"/>
<line x1="2173.52" y1="503.17" x2="2169.42" y2="487.18" stroke="#ffc107" stroke-width="4.4"/>
<line x1="2193.51" y1="498.92" x2="2190.76" y2="482.65" stroke="#ffc107" stroke-width="4.4"/>
<line x1="2213.78" y1="496.36" x2="2212.4" y2="479.91" stroke="#ffc107" stroke-width="4.4"/>
<line x1="2234.2" y1="509.9" x2="2234.2" y2="479" stroke="#ffc107" stroke-width="8.6"/>
<line x1="2254.62" y1="496.36" x2="2256" y2="479.91" stroke="#ffc107" stroke-width="4.4"/>
<line x1="2274.89" y1="498.92" x2="2277.64" y2="482.65" stroke="#ffc107" stroke-width="4.4"/>
<line x1="2294.88" y1="503.17" x2="2298.98" y2="487.18" stroke="#ffc107" stroke-width="4.4"/>
<line x1="2314.44" y1="509.07" x2="2319.87" y2="493.49" stroke="#ffc107" stroke-width="4.4"/>
<line x1="2327.59" y1="529.75" x2="2340.15" y2="501.52" stroke="#ffc107" stroke-width="8.6"/>
<line x1="2351.75" y1="525.68" x2="2359.7" y2="511.22" stroke="#ffc107" stroke-width="4.4"/>
<line x1="2369.23" y1="536.27" x2="2378.36" y2="522.52" stroke="#ffc107" stroke-width="4.4"/>
<line x1="2385.76" y1="548.28" x2="2396.01" y2="535.35" stroke="#ffc107" stroke-width="4.4"/>
<line x1="2401.23" y1="561.63" x2="2412.52" y2="549.6" stroke="#ffc107" stroke-width="4.4"/>
<line x1="2404.83" y1="585.87" x2="2427.79" y2="565.19" stroke="#ffc107" stroke-width="8.6"/>
<line x1="2428.55" y1="591.98" x2="2441.7" y2="582" stroke="#dc3545" stroke-width="4.4"/>
<line x1="2440.22" y1="608.76" x2="2454.15" y2="599.92" stroke="#dc3545" stroke-width="4.4"/>
<line x1="2450.43" y1="626.46" x2="2465.06" y2="618.81" stroke="#dc3545" stroke-width="4.4"/>
<line x1="2459.13" y1="644.95" x2="2474.35" y2="638.55" stroke="#dc3545" stroke-width="4.4"/>
<line x1="2452.56" y1="668.55" x2="2481.95" y2="659" stroke="#dc3545" stroke-width="8.6"/>
<line x1="2471.75" y1="683.78" x2="2487.82" y2="680.01" stroke="#dc3545" stroke-width="4.4"/>
<line x1="2475.58" y1="703.86" x2="2491.91" y2="701.45" stroke="#dc3545" stroke-width="4.4"/>
<line x1="2477.72" y1="724.18" x2="2494.19" y2="723.14" stroke="#dc3545" stroke-width="4.4"/>
<line x1="2478.15" y1="744.61" x2="2494.64" y2="744.96" stroke="#dc3545" stroke-width="4.4"/>
<line x1="2462.54" y1="763.5" x2="2493.27" y2="766.73" stroke="#dc3545" stroke-width="8.6"/>
<line x1="2473.88" y1="785.22" x2="2490.09" y2="788.31" stroke="#dc3545" stroke-width="4.4"/>
<line x1="2469.21" y1="805.12" x2="2485.1" y2="809.55" stroke="#dc3545" stroke-width="4.4"/>
<line x1="2462.9" y1="824.55" x2="2478.36" y2="830.3" stroke="#dc3545" stroke-width="4.4"/>
<line x1="2454.98" y1="843.39" x2="2469.91" y2="850.42" stroke="#dc3545" stroke-width="4.4"/>
<line x1="2433.04" y1="854.3" x2="2459.8" y2="869.75" stroke="#dc3545" stroke-width="8.6"/>
<text x="2051.47" y="852.9" text-anchor="start" class="gl">0.00</text>
<text x="2024.36" y="770.17" text-anchor="start" class="gl">10.0</text>
<text x="2033.53" y="683.65" text-anchor="start" class="gl">20.0</text>
<text x="2077.4" y="608.32" text-anchor="start" class="gl">30.0</text>
<text x="2148.38" y="571.44" text-anchor="start" class="gl">40.0</text>
<text x="2234.2" y="553.35" text-anchor="middle" class="gl">50.0</text>
<text x="2320.02" y="571.44" text-anchor="end" class="gl">60.0</text>
<text x="2391" y="608.32" text-anchor="end" class="gl">70.0</text>
<text x="2434.87" y="683.65" text-anchor="end" class="gl">80.0</text>
<text x="2444.04" y="770.17" text-anchor="end" class="gl">90.0</text>
<text x="2416.93" y="852.9" text-anchor="end" class="gl">100.0</text>
<text x="2234.2" y="870.5" text-anchor="middle" class="gv">31.6</text>
<text x="2234.2" y="913.5" text-anchor="middle" class="gt">Duty Cycle</text>
<text x="2234.2" y="940.5" text-anchor="middle" class="gt">%</text>
<polygon points="2109.05,610.12 2219.47,711.99 2224.8,729.82 2207.13,723.97 2108.55,610.61" fill="#ff6600" stroke="rgba(120,60,20,0.25)" stroke-width="0.6"/>
</g>
<g clip-path="url(#row1)">
<line x1="295.36" y1="1393.5" x2="268.6" y2="1408.95" stroke="#28a745" stroke-width="8.6"/>
<line x1="273.42" y1="1382.59" x2="258.49" y2="1389.62" stroke="#28a745" stroke-width="4.4"/>
<line x1="265.5" y1="1363.75" x2="250.04" y2="1369.5" stroke="#28a745" stroke-width="4.4"/>
<line x1="259.19" y1="1344.32" x2="243.3" y2="1348.75" stroke="#28a745" stroke-width="4.4"/>
<line x1="254.52" y1="1324.42" x2="238.31" y2="1327.51" stroke="#ffc107" stroke-width="4.4"/>
<line x1="265.86" y1="1302.7" x2="235.13" y2="1305.93" stroke="#ffc107" stroke-width="8.6"/>
<line x1="250.25" y1="1283.81" x2="233.76" y2="1284.16" stroke="#ffc107" stroke-width="4.4"/>
<line x1="250.68" y1="1263.38" x2="234.21" y2="1262.34" stroke="#ffc107" stroke-width="4.4"/>
<line x1="252.82" y1="1243.06" x2="236.49" y2="1240.65" stroke="#ffc107" stroke-width="4.4"/>
<line x1="256.65" y1="1222.98" x2="240.58" y2="1219.21" stroke="#ffc107" stroke-width="4.4"/>
<line x1="275.84" y1="1207.75" x2="246.45" y2="1198.2" stroke="#ffc107" stroke-width="8.6"/>
<line x1="269.27" y1="1184.15" x2="254.05" y2="1177.75" stroke="#ffc107" stroke-width="4.4"/>
<line x1="277.97" y1="1165.66" x2="263.34" y2="1158.01" stroke="#ffc107" stroke-width="4.4"/>
<line x1="288.18" y1="1147.96" x2="274.25" y2="1139.12" stroke="#ffc107" stroke-width="4.4"/>
<line x1="299.85" y1="1131.18" x2="286.7" y2="1121.2" stroke="#ffc107" stroke-width="4.4"/>
<line x1="323.57" y1="1125.07" x2="300.61" y2="1104.39" stroke="#ffc107" stroke-width="8.6"/>
<line x1="327.17" y1="1100.83" x2="315.88" y2="1088.8" stroke="#ffc107" stroke-width="4.4"/>
<line x1="342.64" y1="1087.48" x2="332.39" y2="1074.55" stroke="#ffc107" stroke-width="4.4"/>
<line x1="359.17" y1="1075.47" x2="350.04" y2="1061.72" stroke="#ffc107" stroke-width="4.4"/>
<line x1="376.65" y1="1064.88" x2="368.7" y2="1050.42" stroke="#ffc107" stroke-width="4.4"/>
<line x1="400.81" y1="1068.95" x2="388.25" y2="1040.72" stroke="#ffc107" stroke-width="8.6"/>
<line x1="413.96" y1="1048.27" x2="408.53" y2="1032.69" stroke="#ffc107" stroke-width="4.4"/>
<line x1="433.52" y1="1042.37" x2="429.42" y2="1026.38" stroke="#ffc107" stroke-width="4.4"/>
<line x1="453.51" y1="1038.12" x2="450.76" y2="1021.85" stroke="#ffc107" stroke-width="4.4"/>
<line x1="473.78" y1="1035.56" x2="472.4" y2="1019.11" stroke="#ffc107" stroke-width="4.4"/>
<line x1="494.2" y1="1049.1" x2="494.2" y2="1018.2" stroke="#ffc107" stroke-width="8.6"/>
<line x1="514.62" y1="1035.56" x2="516" y2="1019.11" stroke="#ffc107" stroke-width="4.4"/>
<line x1="534.89" y1="1038.12" x2="537.64" y2="1021.85" stroke="#ffc107" stroke-width="4.4"/>
<line x1="554.88" y1="1042.37" x2="558.98" y2="1026.38" stroke="#ffc107" stroke-width="4.4"/>
<line x1="574.44" y1="1048.27" x2="579.87" y2="1032.69" stroke="#ffc107" stroke-width="4.4"/>
<line x1="587.59" y1="1068.95" x2="600.15" y2="1040.72" stroke="#ffc107" stroke-width="8.6"/>
<line x1="611.75" y1="1064.88" x2="619.7" y2="1050.42" stroke="#ffc107" stroke-width="4.4"/>
<line x1="629.23" y1="1075.47" x2="638.36" y2="1061.72" stroke="#ffc107" stroke-width="4.4"/>
<line x1="645.76" y1="1087.48" x2="656.01" y2="1074.55" stroke="#ffc107" stroke-width="4.4"/>
<line x1="661.23" y1="1100.83" x2="672.52" y2="1088.8" stroke="#ffc107" stroke-width="4.4"/>
<line x1="664.83" y1="1125.07" x2="687.79" y2="1104.39" stroke="#ffc107" stroke-width="8.6"/>
<line x1="688.55" y1="1131.18" x2="701.7" y2="1121.2" stroke="#ffc107" stroke-width="4.4"/>
<line x1="700.22" y1="1147.96" x2="714.15" y2="1139.12" stroke="#ffc107" stroke-width="4.4"/>
<line x1="710.43" y1="1165.66" x2="725.06" y2="1158.01" stroke="#ffc107" stroke-width="4.4"/>
<line x1="719.13" y1="1184.15" x2="734.35" y2="1177.75" stroke="#ffc107" stroke-width="4.4"/>
<line x1="712.56" y1="1207.75" x2="741.95" y2="1198.2" stroke="#dc3545" stroke-width="8.6"/>
<line x1="731.75" y1="1222.98" x2="747.82" y2="1219.21" stroke="#dc3545" stroke-width="4.4"/>
<line x1="735.58" y1="1243.06" x2="751.91" y2="1240.65" stroke="#dc3545" stroke-width="4.4"/>
<line x1="737.72" y1="1263.38" x2="754.19" y2="1262.34" stroke="#dc3545" stroke-width="4.4"/>
<line x1="738.15" y1="1283.81" x2="754.64" y2="1284.16" stroke="#dc3545" stroke-width="4.4"/>
<line x1="722.54" y1="1302.7" x2="753.27" y2="1305.93" stroke="#dc3545" stroke-width="8.6"/>
<line x1="733.88" y1="1324.42" x2="750.09" y2="1327.51" stroke="#dc3545" stroke-width="4.4"/>
<line x1="729.21" y1="1344.32" x2="745.1" y2="1348.75" stroke="#dc3545" stroke-width="4.4"/>
<line x1="722.9" y1="1363.75" x2="738.36" y2="1369.5" stroke="#dc3545" stroke-width="4.4"/>
<line x1="714.98" y1="1382.59" x2="729.91" y2="1389.62" stroke="#dc3545" stroke-width="4.4"/>
<line x1="693.04" y1="1393.5" x2="719.8" y2="1408.95" stroke="#dc3545" stroke-width="8.6"/>
<text x="311.47" y="1393.35" text-anchor="start" class="gl">0.00</text>
<text x="284.36" y="1310.32" text-anchor="start" class="gl">25.5</text>
<text x="293.53" y="1223.51" text-anchor="start" class="gl">51.0</text>
<text x="337.4" y="1147.91" text-anchor="start" class="gl">76.5</text>
<text x="408.38" y="1110.9" text-anchor="start" class="gl">102.0</text>
<text x="494.2" y="1092.75" text-anchor="middle" class="gl">127.5</text>
<text x="580.02" y="1110.9" text-anchor="end" class="gl">153.0</text>
<text x="651" y="1147.91" text-anchor="end" class="gl">178.5</text>
<text x="694.87" y="1223.51" text-anchor="end" class="gl">204.0</text>
<text x="704.04" y="1310.32" text-anchor="end" class="gl">229.5</text>
<text x="676.93" y="1393.35" text-anchor="end" class="gl">255.0</text>
<text x="494.2" y="1411.04" text-anchor="middle" class="gv">37.0</text>
<text x="494.2" y="1454.19" text-anchor="middle" class="gt">Engine MAP</text>
<text x="494.2" y="1481.29" text-anchor="middle" class="gt">kPa</text>
<polygon points="314.87,1263.22 465.03,1267.61 480.75,1277.56 463.58,1284.75 314.81,1263.91" fill="#ff6600" stroke="rgba(120,60,20,0.25)" stroke-width="0.6"/>
</g>
<g clip-path="url(#row1)">
<line x1="875.36" y1="1393.5" x2="848.6" y2="1408.95" stroke="#28a745" stroke-width="8.6"/>
<line x1="853.42" y1="1382.59" x2="838.49" y2="1389.62" stroke="#28a745" stroke-width="4.4"/>
<line x1="845.5" y1="1363.75" x2="830.04" y2="1369.5" stroke="#28a745" stroke-width="4.4"/>
<line x1="839.19" y1="1344.32" x2="823.3" y2="1348.75" stroke="#28a745" stroke-width="4.4"/>
<line x1="834.52" y1="1324.42" x2="818.31" y2="1327.51" stroke="#28a745" stroke-width="4.4"/>
<line x1="845.86" y1="1302.7" x2="815.13" y2="1305.93" stroke="#28a745" stroke-width="8.6"/>
<line x1="830.25" y1="1283.81" x2="813.76" y2="1284.16" stroke="#28a745" stroke-width="4.4"/>
<line x1="830.68" y1="1263.38" x2="814.21" y2="1262.34" stroke="#28a745" stroke-width="4.4"/>
<line x1="832.82" y1="1243.06" x2="816.49" y2="1240.65" stroke="#ffc107" stroke-width="4.4"/>
<line x1="836.65" y1="1222.98" x2="820.58" y2="1219.21" stroke="#ffc107" stroke-width="4.4"/>
<line x1="855.84" y1="1207.75" x2="826.45" y2="1198.2" stroke="#ffc107" stroke-width="8.6"/>
<line x1="849.27" y1="1184.15" x2="834.05" y2="1177.75" stroke="#ffc107" stroke-width="4.4"/>
<line x1="857.97" y1="1165.66" x2="843.34" y2="1158.01" stroke="#ffc107" stroke-width="4.4"/>
<line x1="868.18" y1="1147.96" x2="854.25" y2="1139.12" stroke="#ffc107" stroke-width="4.4"/>
<line x1="879.85" y1="1131.18" x2="866.7" y2="1121.2" stroke="#ffc107" stroke-width="4.4"/>
<line x1="903.57" y1="1125.07" x2="880.61" y2="1104.39" stroke="#ffc107" stroke-width="8.6"/>
<line x1="907.17" y1="1100.83" x2="895.88" y2="1088.8" stroke="#ffc107" stroke-width="4.4"/>
<line x1="922.64" y1="1087.48" x2="912.39" y2="1074.55" stroke="#ffc107" stroke-width="4.4"/>
<line x1="939.17" y1="1075.47" x2="930.04" y2="1061.72" stroke="#ffc107" stroke-width="4.4"/>
<line x1="956.65" y1="1064.88" x2="948.7" y2="1050.42" stroke="#ffc107" stroke-width="4.4"/>
<line x1="980.81" y1="1068.95" x2="968.25" y2="1040.72" stroke="#ffc107" stroke-width="8.6"/>
<line x1="993.96" y1="1048.27" x2="988.53" y2="1032.69" stroke="#ffc107" stroke-width="4.4"/>
<line x1="1013.52" y1="1042.37" x2="1009.42" y2="1026.38" stroke="#ffc107" stroke-width="4.4"/>
<line x1="1033.51" y1="1038.12" x2="1030.76" y2="1021.85" stroke="#ffc107" stroke-width="4.4"/>
<line x1="1053.78" y1="1035.56" x2="1052.4" y2="1019.11" stroke="#ffc107" stroke-width="4.4"/>
<line x1="1074.2" y1="1049.1" x2="1074.2" y2="1018.2" stroke="#ffc107" stroke-width="8.6"/>
<line x1="1094.62" y1="1035.56" x2="1096" y2="1019.11" stroke="#ffc107" stroke-width="4.4"/>
<line x1="1114.89" y1="1038.12" x2="1117.64" y2="1021.85" stroke="#dc3545" stroke-width="4.4"/>
<line x1="1134.88" y1="1042.37" x2="1138.98" y2="1026.38" stroke="#dc3545" stroke-width="4.4"/>
<line x1="1154.44" y1="1048.27" x2="1159.87" y2="1032.69" stroke="#dc3545" stroke-width="4.4"/>
<line x1="1167.59" y1="1068.95" x2="1180.15" y2="1040.72" stroke="#dc3545" stroke-width="8.6"/>
<line x1="1191.75" y1="1064.88" x2="1199.7" y2="1050.42" stroke="#dc3545" stroke-width="4.4"/>
<line x1="1209.23" y1="1075.47" x2="1218.36" y2="1061.72" stroke="#dc3545" stroke-width="4.4"/>
<line x1="1225.76" y1="1087.48" x2="1236.01" y2="1074.55" stroke="#dc3545" stroke-width="4.4"/>
<line x1="1241.23" y1="1100.83" x2="1252.52" y2="1088.8" stroke="#dc3545" stroke-width="4.4"/>
<line x1="1244.83" y1="1125.07" x2="1267.79" y2="1104.39" stroke="#dc3545" stroke-width="8.6"/>
<line x1="1268.55" y1="1131.18" x2="1281.7" y2="1121.2" stroke="#dc3545" stroke-width="4.4"/>
<line x1="1280.22" y1="1147.96" x2="1294.15" y2="1139.12" stroke="#dc3545" stroke-width="4.4"/>
<line x1="1290.43" y1="1165.66" x2="1305.06" y2="1158.01" stroke="#dc3545" stroke-width="4.4"/>
<line x1="1299.13" y1="1184.15" x2="1314.35" y2="1177.75" stroke="#dc3545" stroke-width="4.4"/>
<line x1="1292.56" y1="1207.75" x2="1321.95" y2="1198.2" stroke="#dc3545" stroke-width="8.6"/>
<line x1="1311.75" y1="1222.98" x2="1327.82" y2="1219.21" stroke="#dc3545" stroke-width="4.4"/>
<line x1="1315.58" y1="1243.06" x2="1331.91" y2="1240.65" stroke="#dc3545" stroke-width="4.4"/>
<line x1="1317.72" y1="1263.38" x2="1334.19" y2="1262.34" stroke="#dc3545" stroke-width="4.4"/>
<line x1="1318.15" y1="1283.81" x2="1334.64" y2="1284.16" stroke="#dc3545" stroke-width="4.4"/>
<line x1="1302.54" y1="1302.7" x2="1333.27" y2="1305.93" stroke="#dc3545" stroke-width="8.6"/>
<line x1="1313.88" y1="1324.42" x2="1330.09" y2="1327.51" stroke="#dc3545" stroke-width="4.4"/>
<line x1="1309.21" y1="1344.32" x2="1325.1" y2="1348.75" stroke="#dc3545" stroke-width="4.4"/>
<line x1="1302.9" y1="1363.75" x2="1318.36" y2="1369.5" stroke="#dc3545" stroke-width="4.4"/>
<line x1="1294.98" y1="1382.59" x2="1309.91" y2="1389.62" stroke="#dc3545" stroke-width="4.4"/>
<line x1="1273.04" y1="1393.5" x2="1299.8" y2="1408.95" stroke="#dc3545" stroke-width="8.6"/>
<text x="891.47" y="1393.35" text-anchor="start" class="gl">-40.0</text>
<text x="864.36" y="1310.32" text-anchor="start" class="gl">-14.5</text>
<text x="873.53" y="1223.51" text-anchor="start" class="gl">11.0</text>
<text x="917.4" y="1147.91" text-anchor="start" class="gl">36.5</text>
<text x="988.38" y="1110.9" text-anchor="start" class="gl">62.0</text>
<text x="1074.2" y="1092.75" text-anchor="middle" class="gl">87.5</text>
<text x="1160.02" y="1110.9" text-anchor="end" class="gl">113.0</text>
<text x="1231" y="1147.91" text-anchor="end" class="gl">138.5</text>
<text x="1274.87" y="1223.51" text-anchor="end" class="gl">164.0</text>
<text x="1284.04" y="1310.32" text-anchor="end" class="gl">189.5</text>
<text x="1256.93" y="1393.35" text-anchor="end" class="gl">215.0</text>
<text x="1074.2" y="1411.04" text-anchor="middle" class="gv">27.0</text>
<text x="1074.2" y="1454.19" text-anchor="middle" class="gt">Inlet Air Temp</text>
<text x="1074.2" y="1481.29" text-anchor="middle" class="gt">TEMP</text>
<polygon points="923.53,1180.22 1053.75,1255.13 1062.89,1271.34 1044.37,1269.54 923.15,1180.8" fill="#ff6600" stroke="rgba(120,60,20,0.25)" stroke-width="0.6"/>
</g>
<g clip-path="url(#row1)">
<line x1="1455.36" y1="1393.5" x2="1428.6" y2="1408.95" stroke="#28a745" stroke-width="8.6"/>
<line x1="1433.42" y1="1382.59" x2="1418.49" y2="1389.62" stroke="#28a745" stroke-width="4.4"/>
<line x1="1425.5" y1="1363.75" x2="1410.04" y2="1369.5" stroke="#28a745" stroke-width="4.4"/>
<line x1="1419.19" y1="1344.32" x2="1403.3" y2="1348.75" stroke="#28a745" stroke-width="4.4"/>
<line x1="1414.52" y1="1324.42" x2="1398.31" y2="1327.51" stroke="#28a745" stroke-width="4.4"/>
<line x1="1425.86" y1="1302.7" x2="1395.13" y2="1305.93" stroke="#28a745" stroke-width="8.6"/>
<line x1="1410.25" y1="1283.81" x2="1393.76" y2="1284.16" stroke="#28a745" stroke-width="4.4"/>
<line x1="1410.68" y1="1263.38" x2="1394.21" y2="1262.34" stroke="#28a745" stroke-width="4.4"/>
<line x1="1412.82" y1="1243.06" x2="1396.49" y2="1240.65" stroke="#ffc107" stroke-width="4.4"/>
<line x1="1416.65" y1="1222.98" x2="1400.58" y2="1219.21" stroke="#ffc107" stroke-width="4.4"/>
<line x1="1435.84" y1="1207.75" x2="1406.45" y2="1198.2" stroke="#ffc107" stroke-width="8.6"/>
<line x1="1429.27" y1="1184.15" x2="1414.05" y2="1177.75" stroke="#ffc107" stroke-width="4.4"/>
<line x1="1437.97" y1="1165.66" x2="1423.34" y2="1158.01" stroke="#ffc107" stroke-width="4.4"/>
<line x1="1448.18" y1="1147.96" x2="1434.25" y2="1139.12" stroke="#ffc107" stroke-width="4.4"/>
<line x1="1459.85" y1="1131.18" x2="1446.7" y2="1121.2" stroke="#ffc107" stroke-width="4.4"/>
<line x1="1483.57" y1="1125.07" x2="1460.61" y2="1104.39" stroke="#ffc107" stroke-width="8.6"/>
<line x1="1487.17" y1="1100.83" x2="1475.88" y2="1088.8" stroke="#ffc107" stroke-width="4.4"/>
<line x1="1502.64" y1="1087.48" x2="1492.39" y2="1074.55" stroke="#ffc107" stroke-width="4.4"/>
<line x1="1519.17" y1="1075.47" x2="1510.04" y2="1061.72" stroke="#ffc107" stroke-width="4.4"/>
<line x1="1536.65" y1="1064.88" x2="1528.7" y2="1050.42" stroke="#ffc107" stroke-width="4.4"/>
<line x1="1560.81" y1="1068.95" x2="1548.25" y2="1040.72" stroke="#ffc107" stroke-width="8.6"/>
<line x1="1573.96" y1="1048.27" x2="1568.53" y2="1032.69" stroke="#ffc107" stroke-width="4.4"/>
<line x1="1593.52" y1="1042.37" x2="1589.42" y2="1026.38" stroke="#ffc107" stroke-width="4.4"/>
<line x1="1613.51" y1="1038.12" x2="1610.76" y2="1021.85" stroke="#ffc107" stroke-width="4.4"/>
<line x1="1633.78" y1="1035.56" x2="1632.4" y2="1019.11" stroke="#ffc107" stroke-width="4.4"/>
<line x1="1654.2" y1="1049.1" x2="1654.2" y2="1018.2" stroke="#ffc107" stroke-width="8.6"/>
<line x1="1674.62" y1="1035.56" x2="1676" y2="1019.11" stroke="#ffc107" stroke-width="4.4"/>
<line x1="1694.89" y1="1038.12" x2="1697.64" y2="1021.85" stroke="#dc3545" stroke-width="4.4"/>
<line x1="1714.88" y1="1042.37" x2="1718.98" y2="1026.38" stroke="#dc3545" stroke-width="4.4"/>
<line x1="1734.44" y1="1048.27" x2="1739.87" y2="1032.69" stroke="#dc3545" stroke-width="4.4"/>
<line x1="1747.59" y1="1068.95" x2="1760.15" y2="1040.72" stroke="#dc3545" stroke-width="8.6"/>
<line x1="1771.75" y1="1064.88" x2="1779.7" y2="1050.42" stroke="#dc3545" stroke-width="4.4"/>
<line x1="1789.23" y1="1075.47" x2="1798.36" y2="1061.72" stroke="#dc3545" stroke-width="4.4"/>
<line x1="1805.76" y1="1087.48" x2="1816.01" y2="1074.55" stroke="#dc3545" stroke-width="4.4"/>
<line x1="1821.23" y1="1100.83" x2="1832.52" y2="1088.8" stroke="#dc3545" stroke-width="4.4"/>
<line x1="1824.83" y1="1125.07" x2="1847.79" y2="1104.39" stroke="#dc3545" stroke-width="8.6"/>
<line x1="1848.55" y1="1131.18" x2="1861.7" y2="1121.2" stroke="#dc3545" stroke-width="4.4"/>
<line x1="1860.22" y1="1147.96" x2="1874.15" y2="1139.12" stroke="#dc3545" stroke-width="4.4"/>
<line x1="1870.43" y1="1165.66" x2="1885.06" y2="1158.01" stroke="#dc3545" stroke-width="4.4"/>
<line x1="1879.13" y1="1184.15" x2="1894.35" y2="1177.75" stroke="#dc3545" stroke-width="4.4"/>
<line x1="1872.56" y1="1207.75" x2="1901.95" y2="1198.2" stroke="#dc3545" stroke-width="8.6"/>
<line x1="1891.75" y1="1222.98" x2="1907.82" y2="1219.21" stroke="#dc3545" stroke-width="4.4"/>
<line x1="1895.58" y1="1243.06" x2="1911.91" y2="1240.65" stroke="#dc3545" stroke-width="4.4"/>
<line x1="1897.72" y1="1263.38" x2="1914.19" y2="1262.34" stroke="#dc3545" stroke-width="4.4"/>
<line x1="1898.15" y1="1283.81" x2="1914.64" y2="1284.16" stroke="#dc3545" stroke-width="4.4"/>
<line x1="1882.54" y1="1302.7" x2="1913.27" y2="1305.93" stroke="#dc3545" stroke-width="8.6"/>
<line x1="1893.88" y1="1324.42" x2="1910.09" y2="1327.51" stroke="#dc3545" stroke-width="4.4"/>
<line x1="1889.21" y1="1344.32" x2="1905.1" y2="1348.75" stroke="#dc3545" stroke-width="4.4"/>
<line x1="1882.9" y1="1363.75" x2="1898.36" y2="1369.5" stroke="#dc3545" stroke-width="4.4"/>
<line x1="1874.98" y1="1382.59" x2="1889.91" y2="1389.62" stroke="#dc3545" stroke-width="4.4"/>
<line x1="1853.04" y1="1393.5" x2="1879.8" y2="1408.95" stroke="#dc3545" stroke-width="8.6"/>
<text x="1471.47" y="1393.35" text-anchor="start" class="gl">-40.0</text>
<text x="1444.36" y="1310.32" text-anchor="start" class="gl">-14.5</text>
<text x="1453.53" y="1223.51" text-anchor="start" class="gl">11.0</text>
<text x="1497.4" y="1147.91" text-anchor="start" class="gl">36.5</text>
<text x="1568.38" y="1110.9" text-anchor="start" class="gl">62.0</text>
<text x="1654.2" y="1092.75" text-anchor="middle" class="gl">87.5</text>
<text x="1740.02" y="1110.9" text-anchor="end" class="gl">113.0</text>
<text x="1811" y="1147.91" text-anchor="end" class="gl">138.5</text>
<text x="1854.87" y="1223.51" text-anchor="end" class="gl">164.0</text>
<text x="1864.04" y="1310.32" text-anchor="end" class="gl">189.5</text>
<text x="1836.93" y="1393.35" text-anchor="end" class="gl">215.0</text>
<text x="1654.2" y="1411.04" text-anchor="middle" class="gv">83.0</text>
<text x="1654.2" y="1454.19" text-anchor="middle" class="gt">Coolant Temp</text>
<text x="1654.2" y="1481.29" text-anchor="middle" class="gt">TEMP</text>
<polygon points="1641.26,1099.17 1660.56,1248.15 1653.2,1265.24 1643.41,1249.42 1640.56,1099.22" fill="#ff6600" stroke="rgba(120,60,20,0.25)" stroke-width="0.6"/>
</g>
<g clip-path="url(#row1)">
<line x1="2035.36" y1="1393.5" x2="2008.6" y2="1408.95" stroke="#ffc107" stroke-width="8.6"/>
<line x1="2013.42" y1="1382.59" x2="1998.49" y2="1389.62" stroke="#ffc107" stroke-width="4.4"/>
<line x1="2005.5" y1="1363.75" x2="1990.04" y2="1369.5" stroke="#ffc107" stroke-width="4.4"/>
<line x1="1999.19" y1="1344.32" x2="1983.3" y2="1348.75" stroke="#ffc107" stroke-width="4.4"/>
<line x1="1994.52" y1="1324.42" x2="1978.31" y2="1327.51" stroke="#ffc107" stroke-width="4.4"/>
<line x1="2005.86" y1="1302.7" x2="1975.13" y2="1305.93" stroke="#ffc107" stroke-width="8.6"/>
<line x1="1990.25" y1="1283.81" x2="1973.76" y2="1284.16" stroke="#ffc107" stroke-width="4.4"/>
<line x1="1990.68" y1="1263.38" x2="1974.21" y2="1262.34" stroke="#ffc107" stroke-width="4.4"/>
<line x1="1992.82" y1="1243.06" x2="1976.49" y2="1240.65" stroke="#ffc107" stroke-width="4.4"/>
<line x1="1996.65" y1="1222.98" x2="1980.58" y2="1219.21" stroke="#ffc107" stroke-width="4.4"/>
<line x1="2015.84" y1="1207.75" x2="1986.45" y2="1198.2" stroke="#ffc107" stroke-width="8.6"/>
<line x1="2009.27" y1="1184.15" x2="1994.05" y2="1177.75" stroke="#ffc107" stroke-width="4.4"/>
<line x1="2017.97" y1="1165.66" x2="2003.34" y2="1158.01" stroke="#ffc107" stroke-width="4.4"/>
<line x1="2028.18" y1="1147.96" x2="2014.25" y2="1139.12" stroke="#ffc107" stroke-width="4.4"/>
<line x1="2039.85" y1="1131.18" x2="2026.7" y2="1121.2" stroke="#ffc107" stroke-width="4.4"/>
<line x1="2063.57" y1="1125.07" x2="2040.61" y2="1104.39" stroke="#ffc107" stroke-width="8.6"/>
<line x1="2067.17" y1="1100.83" x2="2055.88" y2="1088.8" stroke="#ffc107" stroke-width="4.4"/>
<line x1="2082.64" y1="1087.48" x2="2072.39" y2="1074.55" stroke="#ffc107" stroke-width="4.4"/>
<line x1="2099.17" y1="1075.47" x2="2090.04" y2="1061.72" stroke="#ffc107" stroke-width="4.4"/>
<line x1="2116.65" y1="1064.88" x2="2108.7" y2="1050.42" stroke="#ffc107" stroke-width="4.4"/>
<line x1="2140.81" y1="1068.95" x2="2128.25" y2="1040.72" stroke="#ffc107" stroke-width="8.6"/>
<line x1="2153.96" y1="1048.27" x2="2148.53" y2="1032.69" stroke="#ffc107" stroke-width="4.4"/>
<line x1="2173.52" y1="1042.37" x2="2169.42" y2="1026.38" stroke="#ffc107" stroke-width="4.4"/>
<line x1="2193.51" y1="1038.12" x2="2190.76" y2="1021.85" stroke="#ffc107" stroke-width="4.4"/>
<line x1="2213.78" y1="1035.56" x2="2212.4" y2="1019.11" stroke="#ffc107" stroke-width="4.4"/>
<line x1="2234.2" y1="1049.1" x2="2234.2" y2="1018.2" stroke="#ffc107" stroke-width="8.6"/>
<line x1="2254.62" y1="1035.56" x2="2256" y2="1019.11" stroke="#dc3545" stroke-width="4.4"/>
<line x1="2274.89" y1="1038.12" x2="2277.64" y2="1021.85" stroke="#dc3545" stroke-width="4.4"/>
<line x1="2294.88" y1="1042.37" x2="2298.98" y2="1026.38" stroke="#dc3545" stroke-width="4.4"/>
<line x1="2314.44" y1="1048.27" x2="2319.87" y2="1032.69" stroke="#dc3545" stroke-width="4.4"/>
<line x1="2327.59" y1="1068.95" x2="2340.15" y2="1040.72" stroke="#dc3545" stroke-width="8.6"/>
<line x1="2351.75" y1="1064.88" x2="2359.7" y2="1050.42" stroke="#dc3545" stroke-width="4.4"/>
<line x1="2369.23" y1="1075.47" x2="2378.36" y2="1061.72" stroke="#dc3545" stroke-width="4.4"/>
<line x1="2385.76" y1="1087.48" x2="2396.01" y2="1074.55" stroke="#dc3545" stroke-width="4.4"/>
<line x1="2401.23" y1="1100.83" x2="2412.52" y2="1088.8" stroke="#dc3545" stroke-width="4.4"/>
<line x1="2404.83" y1="1125.07" x2="2427.79" y2="1104.39" stroke="#dc3545" stroke-width="8.6"/>
<line x1="2428.55" y1="1131.18" x2="2441.7" y2="1121.2" stroke="#dc3545" stroke-width="4.4"/>
<line x1="2440.22" y1="1147.96" x2="2454.15" y2="1139.12" stroke="#dc3545" stroke-width="4.4"/>
<line x1="2450.43" y1="1165.66" x2="2465.06" y2="1158.01" stroke="#dc3545" stroke-width="4.4"/>
<line x1="2459.13" y1="1184.15" x2="2474.35" y2="1177.75" stroke="#dc3545" stroke-width="4.4"/>
<line x1="2452.56" y1="1207.75" x2="2481.95" y2="1198.2" stroke="#dc3545" stroke-width="8.6"/>
<line x1="2471.75" y1="1222.98" x2="2487.82" y2="1219.21" stroke="#dc3545" stroke-width="4.4"/>
<line x1="2475.58" y1="1243.06" x2="2491.91" y2="1240.65" stroke="#dc3545" stroke-width="4.4"/>
<line x1="2477.72" y1="1263.38" x2="2494.19" y2="1262.34" stroke="#dc3545" stroke-width="4.4"/>
<line x1="2478.15" y1="1283.81" x2="2494.64" y2="1284.16" stroke="#dc3545" stroke-width="4.4"/>
<line x1="2462.54" y1="1302.7" x2="2493.27" y2="1305.93" stroke="#dc3545" stroke-width="8.6"/>
<line x1="2473.88" y1="1324.42" x2="2490.09" y2="1327.51" stroke="#dc3545" stroke-width="4.4"/>
<line x1="2469.21" y1="1344.32" x2="2485.1" y2="1348.75" stroke="#dc3545" stroke-width="4.4"/>
<line x1="2462.9" y1="1363.75" x2="2478.36" y2="1369.5" stroke="#dc3545" stroke-width="4.4"/>
<line x1="2454.98" y1="1382.59" x2="2469.91" y2="1389.62" stroke="#dc3545" stroke-width="4.4"/>
<line x1="2433.04" y1="1393.5" x2="2459.8" y2="1408.95" stroke="#dc3545" stroke-width="8.6"/>
<text x="2051.47" y="1393.35" text-anchor="start" class="gl">50.0</text>
<text x="2024.36" y="1310.32" text-anchor="start" class="gl">70.0</text>
<text x="2033.53" y="1223.51" text-anchor="start" class="gl">90.0</text>
<text x="2077.4" y="1147.91" text-anchor="start" class="gl">110.0</text>
<text x="2148.38" y="1110.9" text-anchor="start" class="gl">130.0</text>
<text x="2234.2" y="1092.75" text-anchor="middle" class="gl">150.0</text>
<text x="2320.02" y="1110.9" text-anchor="end" class="gl">170.0</text>
<text x="2391" y="1147.91" text-anchor="end" class="gl">190.0</text>
<text x="2434.87" y="1223.51" text-anchor="end" class="gl">210.0</text>
<text x="2444.04" y="1310.32" text-anchor="end" class="gl">230.0</text>
<text x="2416.93" y="1393.35" text-anchor="end" class="gl">250.0</text>
<text x="2234.2" y="1411.04" text-anchor="middle" class="gv">101</text>
<text x="2234.2" y="1454.19" text-anchor="middle" class="gt">Gamma Enrichment</text>
<text x="2234.2" y="1481.29" text-anchor="middle" class="gt">%</text>
<polygon points="2080.42,1185.16 2212.99,1255.8 2222.65,1271.71 2204.08,1270.52 2080.05,1185.75" fill="#ff6600" stroke="rgba(120,60,20,0.25)" stroke-width="0.6"/>
</g></svg>
</body></html>
